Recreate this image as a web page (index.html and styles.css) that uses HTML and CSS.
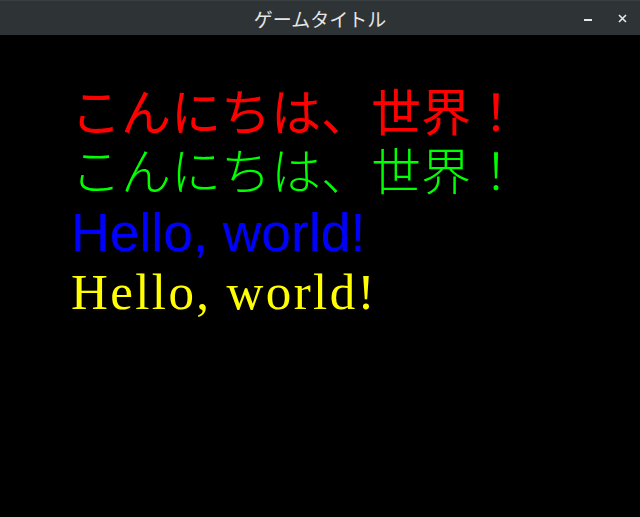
FILE: index.html
```html
<!DOCTYPE html>
<html lang="ja">
<head>
<meta charset="utf-8">
<title>ゲームタイトル</title>
<link rel="stylesheet" href="styles.css">
</head>
<body>
<div class="window">
  <header class="titlebar">
    <span class="title">ゲームタイトル</span>
    <div class="controls">
      <span class="btn-min"></span>
      <svg class="btn-close" width="9" height="9" viewBox="0 0 9 9"><path d="M1 1 L8 8 M8 1 L1 8" stroke="#e8e8e8" stroke-width="1.6"/></svg>
    </div>
  </header>
  <main class="canvas">
    <div class="line red">こんにちは、世界！</div>
    <div class="line green">こんにちは、世界！</div>
    <div class="line blue">Hello, world!</div>
    <div class="line yellow">Hello, world!</div>
  </main>
</div>
</body>
</html>
```
FILE: styles.css
```css
html, body {
  margin: 0;
  padding: 0;
  background: #000;
}
.window {
  width: 640px;
  height: 517px;
  display: flex;
  flex-direction: column;
  background: #000;
}
.titlebar {
  height: 35px;
  flex: none;
  background: #2e3336;
  border-top: 1px solid #3a3f42;
  box-sizing: border-box;
  position: relative;
  display: flex;
  align-items: center;
  justify-content: center;
}
.title {
  font-family: "Noto Sans CJK JP", sans-serif;
  font-size: 19px;
  color: #e4e6e6;
  line-height: 1;
}
.controls {
  position: absolute;
  right: 13px;
  top: 0;
  height: 34px;
  display: flex;
  align-items: center;
  gap: 26px;
}
.btn-min {
  width: 8px;
  height: 1.5px;
  background: #e8e8e8;
  margin-top: 4px;
}
.btn-close {
  display: block;
}
.canvas {
  flex: 1;
  padding: 45px 0 0 71px;
}
.line {
  height: 59px;
  line-height: 59px;
  white-space: nowrap;
}
.red {
  font-family: "Noto Sans CJK JP", sans-serif;
  font-size: 50px;
  color: #ff0000;
}
.green {
  font-family: "Noto Sans CJK JP", sans-serif;
  font-weight: 300;
  font-size: 50px;
  color: #00ff00;
}
.blue {
  margin-top: 5px;
  font-family: "Liberation Sans", Arial, sans-serif;
  font-size: 53.5px;
  color: #0000ff;
}
.yellow {
  margin-top: 1px;
  font-family: "Liberation Serif", "Times New Roman", serif;
  font-size: 51px;
  letter-spacing: 2.4px;
  color: #ffff00;
}
```
